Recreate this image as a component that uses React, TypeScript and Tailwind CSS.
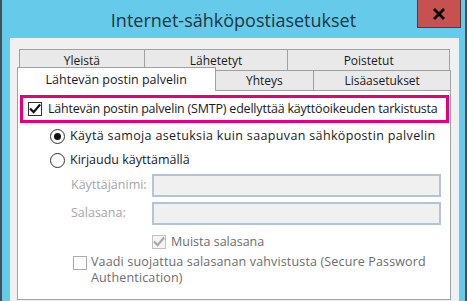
import React from "react";

function CheckMark({ color }: { color: string }) {
  return (
    <svg width="12" height="12" viewBox="0 0 12 12">
      <path d="M1.8 6.2 L4.6 9.2 L10.4 2.4" fill="none" stroke={color} strokeWidth="2.2" strokeLinecap="square" />
    </svg>
  );
}

export default function App() {
  return (
    <div className="w-[467px] h-[301px] overflow-hidden bg-[#66cbea] border-x-2 border-[#44515a] flex flex-col font-['Open_Sans',sans-serif] text-[12px] text-[#1a1a1a]">
      {/* title bar */}
      <div className="relative h-[38px] shrink-0 flex items-center justify-center">
        <span className="text-[18px] leading-none text-[#1f3644] pt-[2px]">Internet-sähköpostiasetukset</span>
        <div className="absolute right-[4px] top-0 w-[44px] h-[28px] bg-[#c75050] border-x border-b border-[#53393a] flex items-center justify-center">
          <svg width="14" height="12" viewBox="0 0 14 12">
            <path d="M2 1 L12 11 M12 1 L2 11" stroke="#000" strokeWidth="2.8" />
          </svg>
        </div>
      </div>

      {/* body */}
      <div className="flex-1 ml-[8px] mr-[6px] bg-[#f0f0f0] pt-[11px] pl-[7px] pr-[8px] flex flex-col">
        {/* tab row 1 */}
        <div className="flex h-[21px] ml-[2px] mr-[1px]">
          <div className="w-[126px] border-t border-x border-[#a0a0a0] bg-[#e9e9e9] flex items-center justify-center pt-px">Yleistä</div>
          <div className="w-[145px] -ml-px border-t border-x border-[#a0a0a0] bg-[#e9e9e9] flex items-center justify-center pt-px">Lähetetyt</div>
          <div className="w-[163px] -ml-px border-t border-x border-[#a0a0a0] bg-[#e9e9e9] flex items-center justify-center pt-px">Poistetut</div>
        </div>
        {/* tab row 2 */}
        <div className="flex items-end h-[20px]">
          <div className="relative z-10 w-[199px] h-[24px] -mb-px border-t border-x border-[#a0a0a0] bg-white flex items-start justify-center pt-[3px] text-[12.5px]">
            Lähtevän postin palvelin
          </div>
          <div className="w-[100px] h-[20px] -ml-px border-t border-x border-[#a0a0a0] bg-[#e9e9e9] flex items-center justify-center pt-px">Yhteys</div>
          <div className="w-[138px] h-[20px] -ml-px border-t border-x border-[#a0a0a0] bg-[#e9e9e9] flex items-center justify-center pt-px">Lisäasetukset</div>
        </div>
        {/* panel */}
        <div className="flex-1 mb-px bg-white border border-[#a0a0a0] flex flex-col pt-[4px]">
          <div className="ml-[2px] mr-px h-[28px] border-[3px] border-[#e4007c] flex items-center pl-[5px] gap-[6px]">
            <div className="w-[14px] h-[14px] shrink-0 border border-[#333] bg-white flex items-center justify-center">
              <CheckMark color="#111" />
            </div>
            <span className="text-[12.5px] whitespace-nowrap tracking-[-0.2px]">Lähtevän postin palvelin (SMTP) edellyttää käyttöoikeuden tarkistusta</span>
          </div>

          <div className="h-[24px] mt-px flex items-center pl-[32px] gap-[5px]">
            <div className="w-[15px] h-[15px] rounded-full border border-[#333] bg-white flex items-center justify-center">
              <div className="w-[7px] h-[7px] rounded-full bg-[#111]" />
            </div>
            <span className="text-[12.5px] tracking-[0.35px]">Käytä samoja asetuksia kuin saapuvan sähköpostin palvelin</span>
          </div>
          <div className="h-[24px] flex items-center pl-[32px] gap-[5px]">
            <div className="w-[15px] h-[15px] rounded-full border border-[#333] bg-white" />
            <span className="text-[12.5px]">Kirjaudu käyttämällä</span>
          </div>

          <div className="mt-[2px] flex items-center pl-[53px]">
            <span className="w-[81px] text-[#a6a6a6] text-[12.5px]">Käyttäjänimi:</span>
            <div className="w-[289px] h-[23px] border-2 border-[#b3c4d6] bg-[#f0f0f0]" />
          </div>
          <div className="mt-[5px] flex items-center pl-[53px]">
            <span className="w-[81px] text-[#a6a6a6] text-[12.5px]">Salasana:</span>
            <div className="w-[289px] h-[23px] border-2 border-[#b3c4d6] bg-[#f0f0f0]" />
          </div>

          <div className="mt-[8px] flex items-center pl-[134px] gap-[5px]">
            <div className="w-[14px] h-[14px] border border-[#c2c2c2] bg-[#f4f4f4] flex items-center justify-center">
              <CheckMark color="#a8a8a8" />
            </div>
            <span className="text-[#6d6d6d] text-[12.5px]">Muista salasana</span>
          </div>

          <div className="mt-[3px] flex items-start pl-[55px] gap-[4px]">
            <div className="w-[14px] h-[14px] mt-[1px] border border-[#adadad] bg-white shrink-0" />
            <div className="text-[#6d6d6d] text-[12.5px] leading-[16px] -mt-px tracking-[0.15px]">
              <div>Vaadi suojattua salasanan vahvistusta (Secure Password</div>
              <div>Authentication)</div>
            </div>
          </div>
        </div>
      </div>
    </div>
  );
}
